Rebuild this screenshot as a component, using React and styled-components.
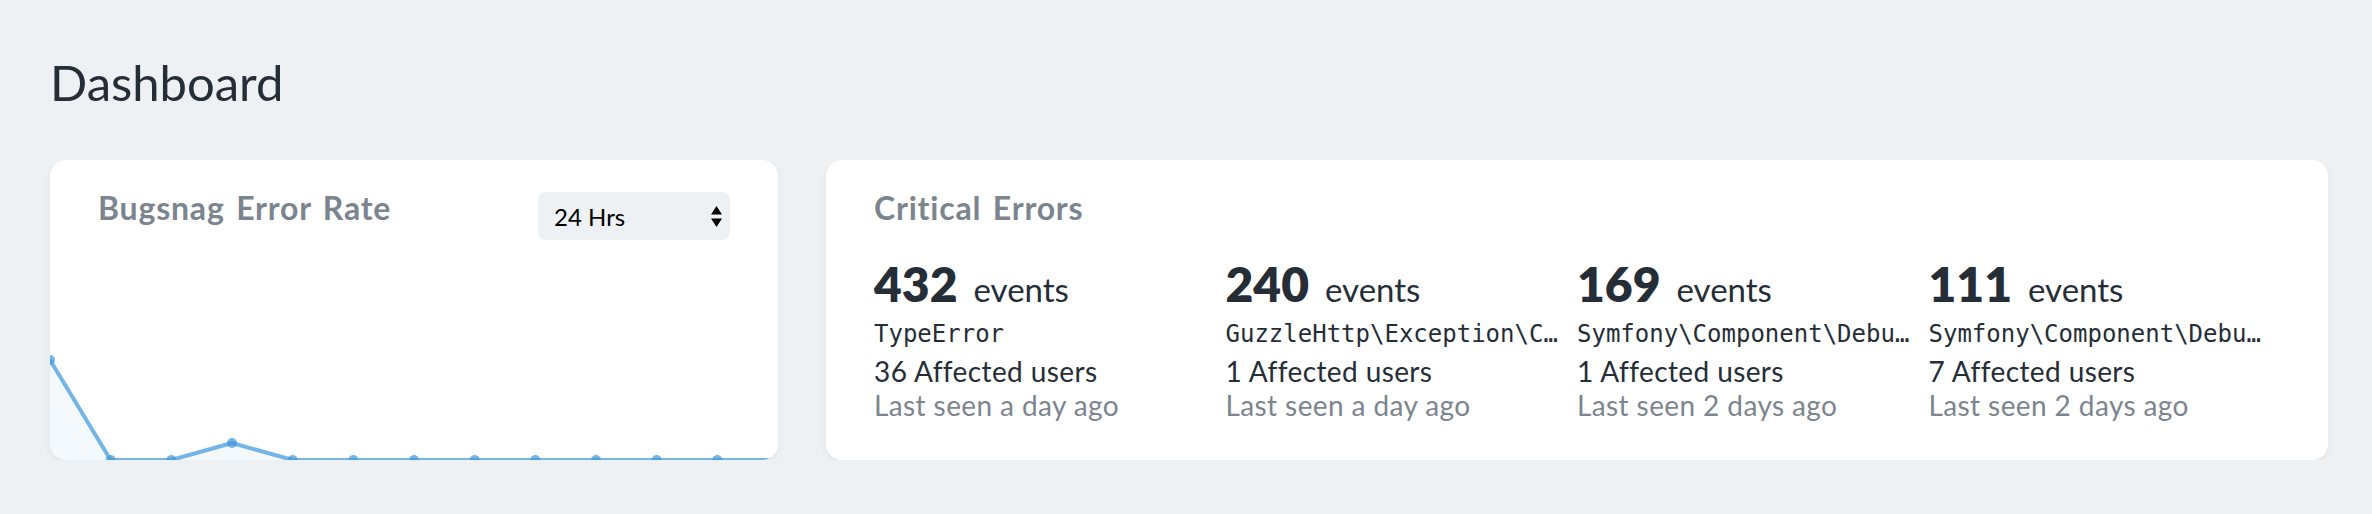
import React from "react"
import styled, { createGlobalStyle } from "styled-components"

const GlobalStyle = createGlobalStyle`
  html, body {
    margin: 0;
    padding: 0;
    background: #eef1f4;
  }
  body {
    font-family: Lato, "Noto Sans", sans-serif;
    color: #252d37;
    -webkit-font-smoothing: antialiased;
  }
`

const Page = styled.div`
  padding: 58px 44px 0 50px;
`

const Heading = styled.h1`
  margin: 0 0 54px;
  font-size: 49px;
  line-height: 48px;
  font-weight: 400;
  color: #252d37;
`

const Cards = styled.div`
  display: grid;
  grid-template-columns: 728px 1502px;
  column-gap: 48px;
  align-items: start;
`

const Card = styled.div`
  position: relative;
  display: flex;
  flex-direction: column;
  height: 300px;
  box-sizing: border-box;
  padding-top: 32px;
  background: #fff;
  border-radius: 16px;
  box-shadow: 0 4px 8px rgba(0, 0, 0, 0.05);
  overflow: hidden;
`

const CardHeader = styled.div`
  display: flex;
  align-items: flex-start;
  padding: 0 48px;
`

const CardTitle = styled.h3`
  margin: 0 24px 0 0;
  font-size: 32px;
  line-height: 32px;
  font-weight: 700;
  letter-spacing: 0.8px;
  word-spacing: 3px;
  color: #7c858e;
`

const SelectWrap = styled.div`
  position: relative;
  margin-left: auto;
  width: 192px;
  height: 48px;
`

const Select = styled.select`
  appearance: none;
  -webkit-appearance: none;
  width: 100%;
  height: 100%;
  box-sizing: border-box;
  padding: 0 48px 0 16px;
  border: none;
  border-radius: 8px;
  background: #eef1f4;
  font-family: Lato, "Noto Sans", sans-serif;
  font-size: 24px;
  color: #000;
  outline: none;
`

const SelectArrow = styled.svg`
  position: absolute;
  top: 14px;
  right: 8px;
  pointer-events: none;
`

const Chart = styled.svg`
  display: block;
  margin-top: auto;
`

const Metrics = styled.div`
  display: grid;
  grid-template-columns: repeat(4, minmax(0, 1fr));
  padding: 0 48px;
  margin-top: 36px;
`

const Metric = styled.div`
  min-width: 0;
  padding-right: 16px;
`

const Count = styled.div`
  font-size: 48px;
  line-height: 48px;
  white-space: nowrap;

  strong {
    font-weight: 800;
  }

  span {
    margin-left: 16px;
    font-size: 33px;
    line-height: 1;
  }
`

const ErrorClass = styled.div`
  margin-top: 8px;
  font-family: "DejaVu Sans Mono", "Liberation Mono", monospace;
  font-size: 24px;
  line-height: 36px;
  white-space: nowrap;
  overflow: hidden;
  text-overflow: ellipsis;
`

const Line = styled.div`
  font-size: 28px;
  line-height: 34px;
  letter-spacing: 0.4px;
  color: ${p => (p.muted ? "#7c858e" : "#252d37")};
  margin-top: ${p => (p.first ? "2px" : "0")};
  white-space: nowrap;
`

const rate = [100, 0, 0, 17, 0, 0, 0, 0, 0, 0, 0, 0, 0]
const CHART_W = 728
const CHART_H = 120

function ErrorRateChart() {
  const step = CHART_W / (rate.length - 1)
  const pts = rate.map((v, i) => [i * step, CHART_H - v])
  const line = pts.map(([x, y], i) => `${i ? "L" : "M"}${x} ${y}`).join(" ")
  const area = `${line} L${CHART_W} ${CHART_H} L0 ${CHART_H} Z`
  return (
    <Chart width={CHART_W} height={CHART_H} viewBox={`0 0 ${CHART_W} ${CHART_H}`}>
      <path d={area} fill="#4099de" fillOpacity="0.06" />
      <path d={line} fill="none" stroke="#4099de" strokeOpacity="0.72" strokeWidth="4" strokeLinejoin="round" />
      {pts.map(([x, y], i) => (
        <circle key={i} cx={x} cy={y} r="5" fill="#4099de" fillOpacity="0.72" />
      ))}
    </Chart>
  )
}

const errors = [
  { count: 432, name: "TypeError", users: 36, seen: "a day ago" },
  { count: 240, name: "GuzzleHttp\\Exception\\ClientException", users: 1, seen: "a day ago" },
  { count: 169, name: "Symfony\\Component\\Debug\\Exception\\FatalThrowableError", users: 1, seen: "2 days ago" },
  { count: 111, name: "Symfony\\Component\\Debug\\Exception\\FatalErrorException", users: 7, seen: "2 days ago" },
]

export default function App() {
  return (
    <Page>
      <GlobalStyle />
      <Heading>Dashboard</Heading>
      <Cards>
        <Card>
          <CardHeader>
            <CardTitle>Bugsnag Error Rate</CardTitle>
            <SelectWrap>
              <Select defaultValue="24">
                <option value="24">24 Hrs</option>
                <option value="168">7 Days</option>
                <option value="720">30 Days</option>
              </Select>
              <SelectArrow width="11" height="21" viewBox="0 0 11 21">
                <path d="M5.5 0 L11 8.5 L0 8.5 Z M0 12.5 L11 12.5 L5.5 21 Z" fill="#000" />
              </SelectArrow>
            </SelectWrap>
          </CardHeader>
          <ErrorRateChart />
        </Card>
        <Card>
          <CardHeader>
            <CardTitle>Critical Errors</CardTitle>
          </CardHeader>
          <Metrics>
            {errors.map(e => (
              <Metric key={e.count}>
                <Count>
                  <strong>{e.count}</strong>
                  <span>events</span>
                </Count>
                <ErrorClass>{e.name}</ErrorClass>
                <Line first>{e.users} Affected users</Line>
                <Line muted>Last seen {e.seen}</Line>
              </Metric>
            ))}
          </Metrics>
        </Card>
      </Cards>
    </Page>
  )
}
